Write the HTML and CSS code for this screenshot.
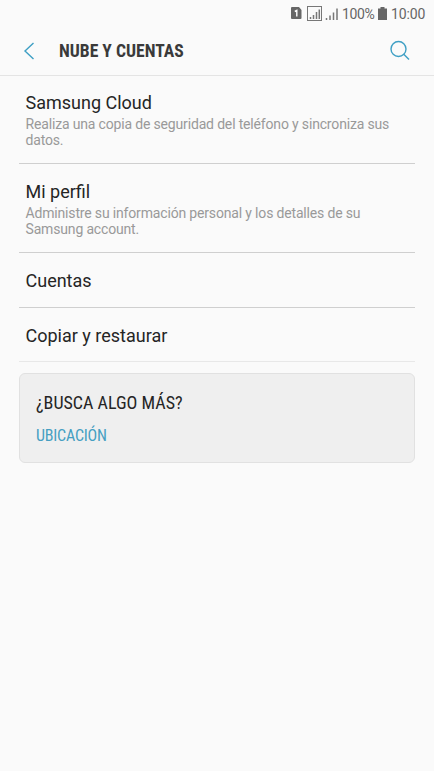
FILE: index.html
```html
<!DOCTYPE html>
<html lang="es">
<head>
<meta charset="utf-8">
<title>Nube y cuentas</title>
<link rel="stylesheet" href="styles.css">
</head>
<body>
<div class="status">
<svg class="icons" width="50" height="16" viewBox="0 0 50 16">
<path class="fill" d="M2 2q0-1 1-1h7l2.500 3v8q0 1-1 1H3q-1 0-1-1z"/>
<path class="one" d="M5.800 5.500L7.800 4.500V10.500"/>
<rect class="frame" x="18.500" y=".5" width="14" height="14"/>
<path class="bars" d="M21.500 11v2M24.500 9v4M27.500 6v7M30.300 3.500v9.500M37.500 12v2M41 9.500v4.500M44.500 6.500v7.500M48 2.500v11.500"/>
</svg>
<span class="pct">100%</span>
<svg class="battery" width="9" height="13" viewBox="0 0 9 13"><path d="M2.500 0h4v1.500H9V13H0V1.500h2.500z"/></svg>
<span class="clock">10:00</span>
</div>
<header class="bar">
<svg class="back" width="12" height="18" viewBox="0 0 12 18"><path d="M10.500 1L2 9l8.500 8"/></svg>
<h1>NUBE Y CUENTAS</h1>
<svg class="search" width="22" height="22" viewBox="0 0 22 22"><circle cx="9.500" cy="9" r="7.500"/><path d="M14.500 14l5.500 5.500"/></svg>
</header>
<main>
<section class="item two first"><h2>Samsung Cloud</h2><p>Realiza una copia de seguridad del teléfono y sincroniza sus<br>datos.</p></section>
<section class="item two"><h2>Mi perfil</h2><p>Administre su información personal y los detalles de su<br>Samsung account.</p></section>
<section class="item single"><h2>Cuentas</h2></section>
<section class="item single last"><h2>Copiar y restaurar</h2></section>
<aside class="card"><h3>¿BUSCA ALGO MÁS?</h3><a>UBICACIÓN</a></aside>
</main>
</body>
</html>
```
FILE: styles.css
```css
* { box-sizing: border-box; }
body { margin: 0; width: 434px; height: 771px; background: #fafafa; font-family: Roboto, "Liberation Sans", sans-serif; color: #252525; overflow: hidden; }
h1, h2, h3, p { margin: 0; font-weight: 400; }
svg { display: block; flex: none; }
.status { height: 27px; display: flex; align-items: center; padding-left: 289px; font-size: 14px; color: #666; white-space: nowrap; }
.icons { margin-right: 3px; }
.fill, .battery { fill: #666; }
.one { fill: none; stroke: #fff; stroke-width: 1.4; }
.frame { fill: none; stroke: #777; }
.bars { stroke: #777; stroke-width: 1.5; }
.pct { width: 36px; letter-spacing: -.4px; }
.clock { margin-left: 4px; letter-spacing: -.15px; }
.bar { height: 49px; border-bottom: 1px solid #e4e4e4; display: flex; align-items: center; padding: 0 23px; }
.back, .search { fill: none; stroke: #3e9fc4; stroke-width: 1.4; }
h1 { margin-left: 24px; font-size: 17.6px; font-weight: 700; flex: 1; font-stretch: condensed; color: #3a3a3a; }
main { padding: 0 19px; }
.item { border-bottom: 1px solid #cfcfcf; padding: 0 6.500px; }
.two { height: 89px; padding-top: 17px; }
.first { height: 88px; padding-top: 16px; }
.item h2 { font-size: 18px; line-height: 22px; }
.item p { margin-top: 2px; font-size: 14px; letter-spacing: -.165px; line-height: 16px; color: #999; white-space: nowrap; }
.single { height: 55px; padding-top: 17px; }
.last { height: 54px; border-color: #e8e8e8; }
.card { margin-top: 11px; height: 90px; border: 1px solid #e1e1e1; border-radius: 6px; background: #efefef; padding: 18px 16px; }
.card h3 { font-size: 18px; line-height: 22px; font-stretch: condensed; }
.card a { display: block; margin-top: 12px; font-size: 16px; letter-spacing: -.2px; line-height: 20px; color: #469fc2; font-stretch: condensed; }
```
